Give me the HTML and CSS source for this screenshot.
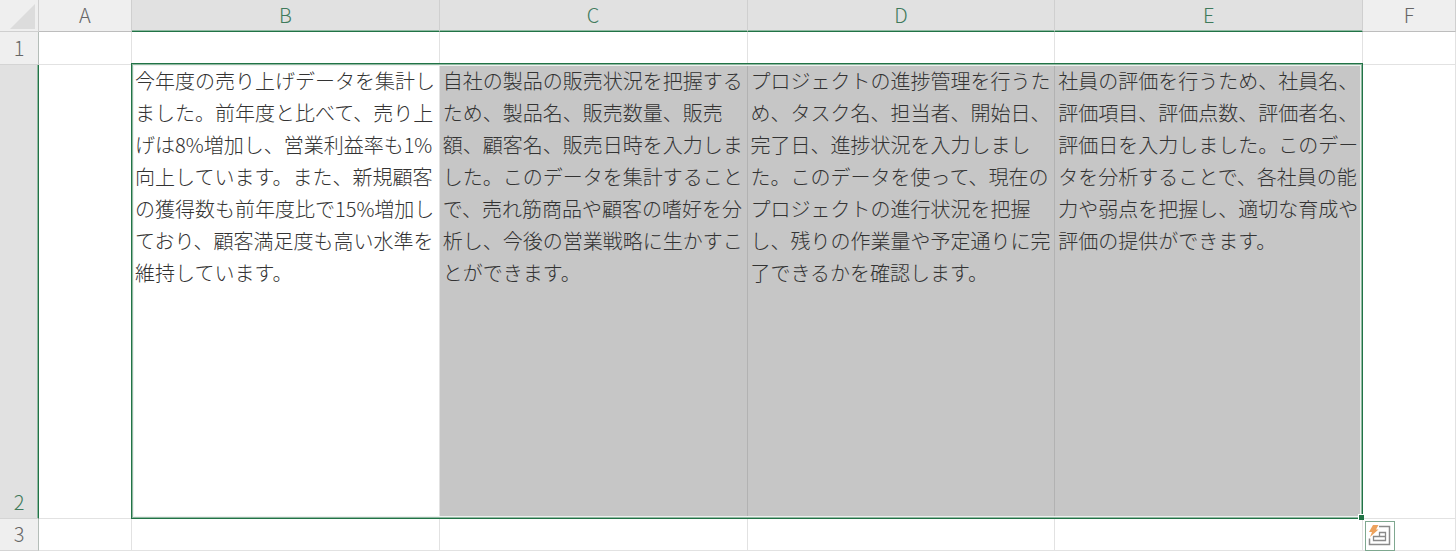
FILE: index.html
```html
<!DOCTYPE html>
<html lang="ja">
<head>
<meta charset="UTF-8">
<title>Sheet1</title>
<meta name="viewport" content="width=device-width, initial-scale=1">
<link rel="stylesheet" href="styles.css">
</head>
<body>

<div class="sheet">
  <table class="grid">
    <colgroup>
      <col class="col-head">
      <col class="col-narrow">
      <col>
      <col>
      <col>
      <col>
      <col class="col-narrow">
    </colgroup>
    <thead>
      <tr>
        <td class="corner">
          <svg width="25" height="25" viewBox="0 0 25 25"><path d="M25 0V25H0Z" fill="#dcdcdc"/></svg>
        </td>
        <th scope="col">A</th>
        <th scope="col" class="active">B</th>
        <th scope="col" class="active">C</th>
        <th scope="col" class="active">D</th>
        <th scope="col" class="active">E</th>
        <th scope="col">F</th>
      </tr>
    </thead>
    <tbody>
      <tr class="row-short">
        <th scope="row">1</th>
        <td></td><td></td><td></td><td></td><td></td><td></td>
      </tr>
      <tr class="row-tall">
        <th scope="row" class="active">2</th>
        <td></td>
        <td>今年度の売り上げデータを集計しました。前年度と比べて、売り上げは8%増加し、営業利益率も1%向上しています。また、新規顧客の獲得数も前年度比で15%増加しており、顧客満足度も高い水準を維持しています。</td>
        <td class="selected">自社の製品の販売状況を把握するため、製品名、販売数量、販売額、顧客名、販売日時を入力しました。このデータを集計することで、売れ筋商品や顧客の嗜好を分析し、今後の営業戦略に生かすことができます。</td>
        <td class="selected">プロジェクトの進捗管理を行うため、タスク名、担当者、開始日、完了日、進捗状況を入力しました。このデータを使って、現在のプロジェクトの進行状況を把握し、残りの作業量や予定通りに完了できるかを確認します。</td>
        <td class="selected">社員の評価を行うため、社員名、評価項目、評価点数、評価者名、評価日を入力しました。このデータを分析することで、各社員の能力や弱点を把握し、適切な育成や評価の提供ができます。</td>
        <td></td>
      </tr>
      <tr class="row-last">
        <th scope="row">3</th>
        <td></td><td></td><td></td><td></td><td></td><td></td>
      </tr>
    </tbody>
  </table>

  <!-- selection frame, fill handle and quick analysis button -->
  <div class="selection">
    <span class="handle"></span>
    <button class="quick" type="button" aria-label="クイック分析">
      <svg width="24" height="24" viewBox="0 0 24 24" fill="none">
        <path d="M11 2.500H21.500V20.500H1.500V14.500" stroke="#8a8a8a" stroke-width="1.500"/>
        <path d="M5.500 12.500H17.500V16.500H5.500Z M11.500 12V8.500H17.500V12" stroke="#8a8a8a" stroke-width="1.300"/>
        <path d="M5 1H10.500L8 5.500H10.500L2 13L4 8H1Z" fill="#eda25c"/>
      </svg>
    </button>
  </div>
</div>

</body>
</html>
```

FILE: styles.css
```css
* {
  box-sizing: border-box;
}

body {
  margin: 0;
  background-color: white;
  color: #333;
  font-family: "Noto Sans CJK JP", sans-serif;
  font-weight: 300;
}

.sheet {
  position: relative;
}

/* Cell grid */
.grid {
  width: 100%;
  table-layout: fixed;
  border-collapse: separate;
  border-spacing: 0;
}

.col-head {
  width: 39px;
}

.col-narrow {
  width: 93px;
}

.grid td {
  padding: 0 1px 0 3px;
  border-right: 1px solid #e2e2e2;
  border-bottom: 1px solid #e2e2e2;
  vertical-align: top;
  font-size: 20px;
  line-height: 32px;
}

/* Column and row headings */
.grid th {
  padding: 0 0 2px;
  background-color: #efefef;
  color: #666;
  font-size: 20px;
  font-weight: 300;
  line-height: 28px;
}

.grid thead th {
  height: 32px;
  border-right: 1px solid #cfcfcf;
  border-bottom: 1px solid #bdbdbd;
}

.grid tbody th {
  border-right: 1px solid #b4bdb8;
  border-bottom: 1px solid #d4d4d4;
  vertical-align: bottom;
}

.grid th.active {
  background-color: #e1e1e1;
  color: #3f7a5b;
}

.grid thead th.active {
  border-bottom-color: #217346;
  box-shadow: inset 0 -1px #90b9a2;
}

.grid tbody th.active {
  border-right-color: #217346;
  box-shadow: inset -1px 0 #90b9a2;
}

.grid td.corner {
  padding: 4px 3px 0 0;
  background-color: #efefef;
  border-color: #cfcfcf;
  line-height: 0;
  text-align: right;
}

.row-short {
  height: 33px;
}

.row-tall {
  height: 454px;
}

.row-last {
  height: 32px;
}

.grid td.selected {
  background-color: #c6c6c6;
  border-right-color: #b2b2b2;
}

/* Selection frame */
.selection {
  position: absolute;
  top: 63px;
  right: 93px;
  bottom: 32px;
  left: 131px;
  border: 1px solid #217346;
  box-shadow: inset 0 0 0 1px #90b9a2, inset 0 0 0 2px #eef2ef;
  pointer-events: none;
}

.handle {
  position: absolute;
  right: -2px;
  bottom: -2px;
  width: 6px;
  height: 6px;
  background-color: #217346;
  border: 1px solid white;
  border-width: 1px 0 0 1px;
}

.quick {
  position: absolute;
  top: 100%;
  left: 100%;
  display: flex;
  align-items: center;
  justify-content: center;
  width: 30px;
  height: 30px;
  margin: 3px 0 0 3px;
  padding: 0;
  background-color: white;
  border: 1px solid #7fa890;
  pointer-events: auto;
}
```
